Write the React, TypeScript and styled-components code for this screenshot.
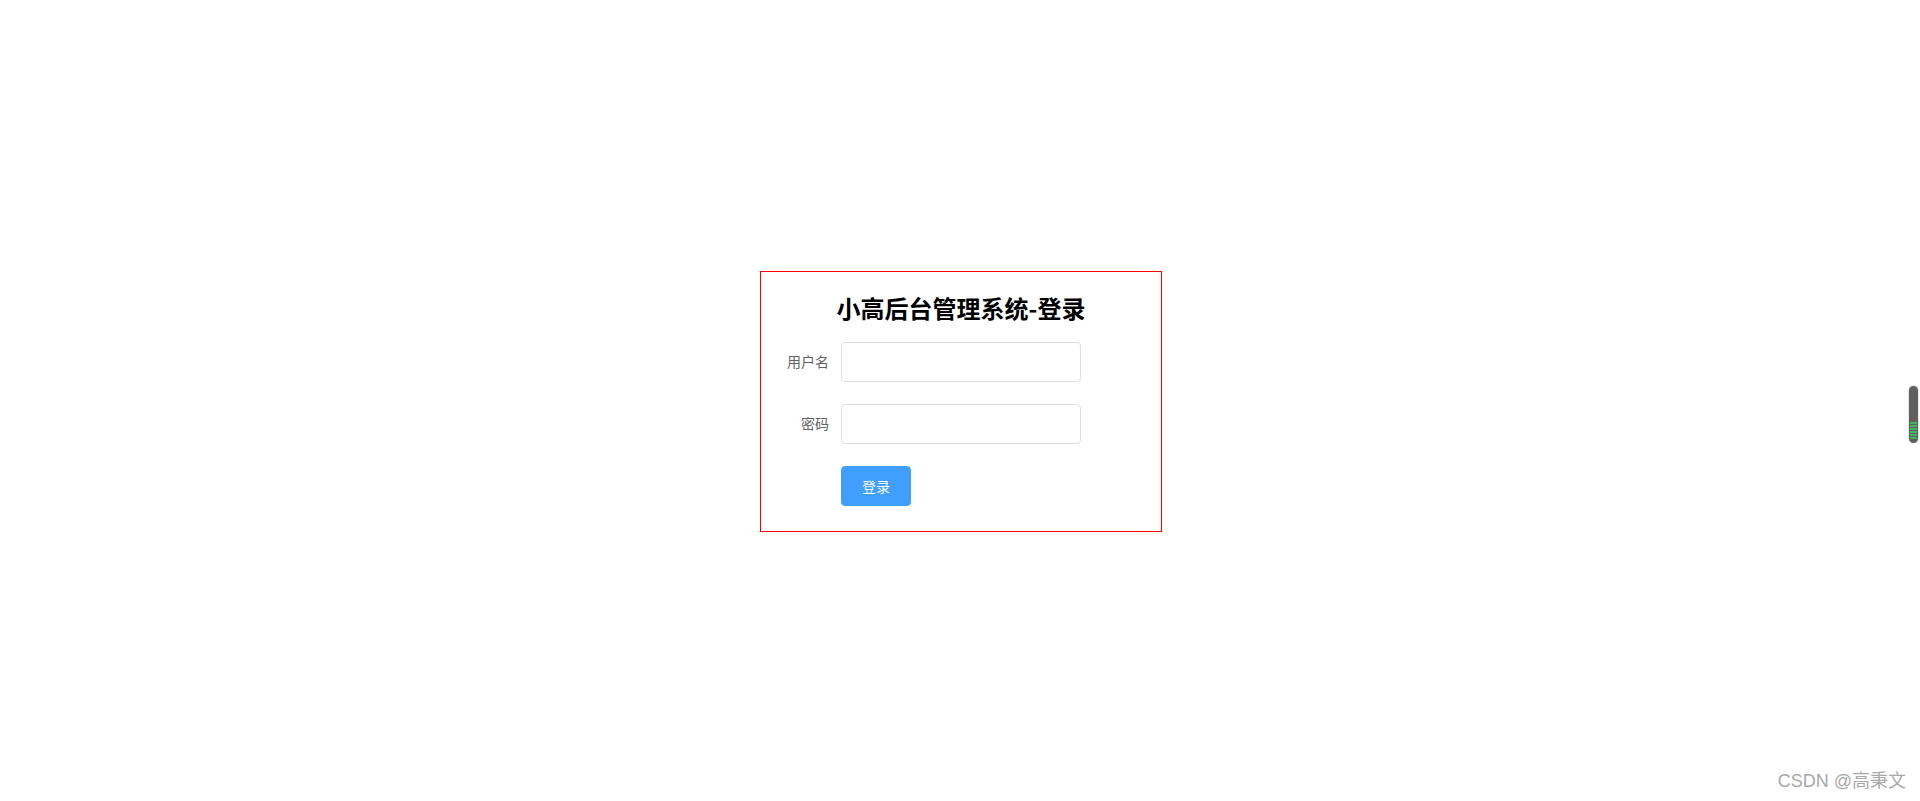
import React from "react";
import styled, { createGlobalStyle } from "styled-components";

const Global = createGlobalStyle`
  html, body { margin: 0; padding: 0; background: #fff; }
  body { font-family: "Liberation Sans", "Noto Sans CJK SC", sans-serif; }
  * { box-sizing: border-box; }
`;

const Page = styled.div`
  width: 100%;
  height: 801px;
  display: flex;
  align-items: center;
  justify-content: center;
  padding-left: 2px;
  padding-top: 1px;
  position: relative;
  overflow: hidden;
`;

const Card = styled.div`
  width: 402px;
  height: 261px;
  border: 1px solid #ff0000;
  padding-bottom: 3px;
`;

const Title = styled.h2`
  margin: 20px 0 18px;
  font-size: 24px;
  line-height: 32px;
  font-weight: bold;
  text-align: center;
  color: #000;
  font-family: "Noto Sans CJK SC", sans-serif;
`;

const Form = styled.form`
  margin: 0;
`;

const Item = styled.div`
  display: flex;
  margin-bottom: 22px;
`;

const Label = styled.label`
  width: 80px;
  padding-right: 12px;
  text-align: right;
  font-size: 14px;
  line-height: 39px;
  color: #606266;
  font-family: "Noto Sans CJK SC", sans-serif;
`;

const Field = styled.div<{ $offset?: boolean }>`
  margin-left: ${(p) => (p.$offset ? "80px" : "0")};
`;

const Input = styled.input`
  width: 240px;
  height: 40px;
  border: 1px solid #dcdfe6;
  border-radius: 4px;
  padding: 0 15px;
  font-size: 14px;
  outline: none;
  background: #fff;
  display: block;
`;

const Button = styled.button`
  width: 70px;
  height: 40px;
  padding: 0;
  background: #409eff;
  border: 1px solid #409eff;
  border-radius: 4px;
  color: #fff;
  font-size: 14px;
  font-family: "Noto Sans CJK SC", sans-serif;
  cursor: pointer;
  display: block;
`;

const Watermark = styled.div`
  position: absolute;
  right: 14px;
  bottom: 8px;
  font-size: 18px;
  color: #a8a8a8;
  font-family: "Liberation Sans", "Noto Sans CJK SC", sans-serif;
  line-height: 24px;
`;

const Indicator = styled.div`
  position: absolute;
  right: 2px;
  top: 386px;
  width: 9px;
  height: 57px;
  border-radius: 5px;
  background: #5f5f5f;
  box-shadow: 0 0 0 1px #e8e8e8;
  overflow: hidden;
  display: flex;
  flex-direction: column;
  justify-content: flex-end;
  padding: 0 1px 3px;
`;

const Stripes = styled.div`
  height: 18px;
  border-radius: 0 0 4px 4px;
  background: repeating-linear-gradient(
    to bottom,
    #3cb95a 0px,
    #3cb95a 2px,
    #5f5f5f 2px,
    #5f5f5f 3px
  );
`;

export default function App() {
  return (
    <>
      <Global />
      <Page>
        <Card>
          <Title>小高后台管理系统-登录</Title>
          <Form onSubmit={(e) => e.preventDefault()}>
            <Item>
              <Label>用户名</Label>
              <Field>
                <Input type="text" />
              </Field>
            </Item>
            <Item>
              <Label>密码</Label>
              <Field>
                <Input type="password" />
              </Field>
            </Item>
            <Item>
              <Field $offset>
                <Button type="submit">登录</Button>
              </Field>
            </Item>
          </Form>
        </Card>
        <Indicator>
          <Stripes />
        </Indicator>
        <Watermark>CSDN @高秉文</Watermark>
      </Page>
    </>
  );
}
